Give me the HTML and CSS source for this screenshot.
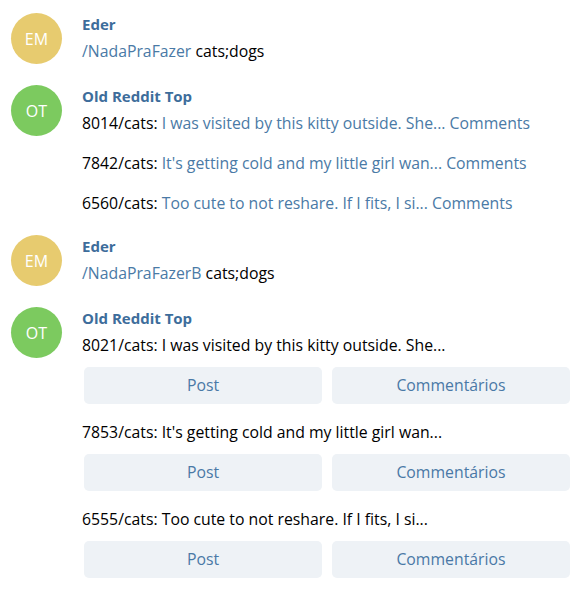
FILE: index.html
```html
<!DOCTYPE html>
<html>
<head>
<meta charset="utf-8">
<link rel="stylesheet" href="styles.css">
</head>
<body>
<div class="chat">
  <div class="group">
    <div class="avatar yellow">EM</div>
    <div class="content">
      <div class="name">Eder</div>
      <div class="msg"><span class="link">/NadaPraFazer</span> cats;dogs</div>
    </div>
  </div>
  <div class="group">
    <div class="avatar green">OT</div>
    <div class="content">
      <div class="name">Old Reddit Top</div>
      <div class="msg">8014/cats: <span class="link">I was visited by this kitty outside. She... Comments</span></div>
      <div class="msg">7842/cats: <span class="link">It's getting cold and my little girl wan... Comments</span></div>
      <div class="msg">6560/cats: <span class="link">Too cute to not reshare. If I fits, I si... Comments</span></div>
    </div>
  </div>
  <div class="group">
    <div class="avatar yellow">EM</div>
    <div class="content">
      <div class="name">Eder</div>
      <div class="msg"><span class="link">/NadaPraFazerB</span> cats;dogs</div>
    </div>
  </div>
  <div class="group">
    <div class="avatar green">OT</div>
    <div class="content">
      <div class="name">Old Reddit Top</div>
      <div class="msg">8021/cats: I was visited by this kitty outside. She...</div>
      <div class="buttons"><div class="btn">Post</div><div class="btn">Commentários</div></div>
      <div class="msg">7853/cats: It's getting cold and my little girl wan...</div>
      <div class="buttons"><div class="btn">Post</div><div class="btn">Commentários</div></div>
      <div class="msg">6555/cats: Too cute to not reshare. If I fits, I si...</div>
      <div class="buttons"><div class="btn">Post</div><div class="btn">Commentários</div></div>
    </div>
  </div>
</div>
</body>
</html>
```
FILE: styles.css
```css
html, body {
  margin: 0;
  padding: 0;
  background: #ffffff;
}
body {
  font-family: "Open Sans", "Noto Sans", sans-serif;
  font-size: 15.8px;
  color: #000000;
}
.chat {
  display: flex;
  flex-direction: column;
  gap: 21px;
  padding: 13px 12px 0 11px;
}
.group {
  display: flex;
  align-items: flex-start;
}
.avatar {
  width: 51px;
  height: 51px;
  border-radius: 50%;
  flex: none;
  display: flex;
  align-items: center;
  justify-content: center;
  color: #ffffff;
  font-size: 16px;
  margin-right: 20px;
}
.yellow { background: #e7cb6f; }
.green { background: #7cca5f; }
.content {
  flex: 1;
  display: flex;
  flex-direction: column;
}
.name {
  font-weight: 700;
  font-size: 15px;
  color: #3d6d9b;
  line-height: 22px;
  margin-bottom: 5px;
}
.msg {
  line-height: 22px;
}
.msg + .msg {
  margin-top: 18px;
}
.link {
  color: #4a7aa6;
}
.buttons {
  display: grid;
  grid-template-columns: 1fr 1fr;
  gap: 10px;
  margin: 10.5px 0 17.5px 2px;
}
.buttons:last-child {
  margin-bottom: 0;
}
.btn {
  height: 37px;
  background: #eef2f6;
  border-radius: 5px;
  display: flex;
  align-items: center;
  justify-content: center;
  color: #4a79a6;
}
```
